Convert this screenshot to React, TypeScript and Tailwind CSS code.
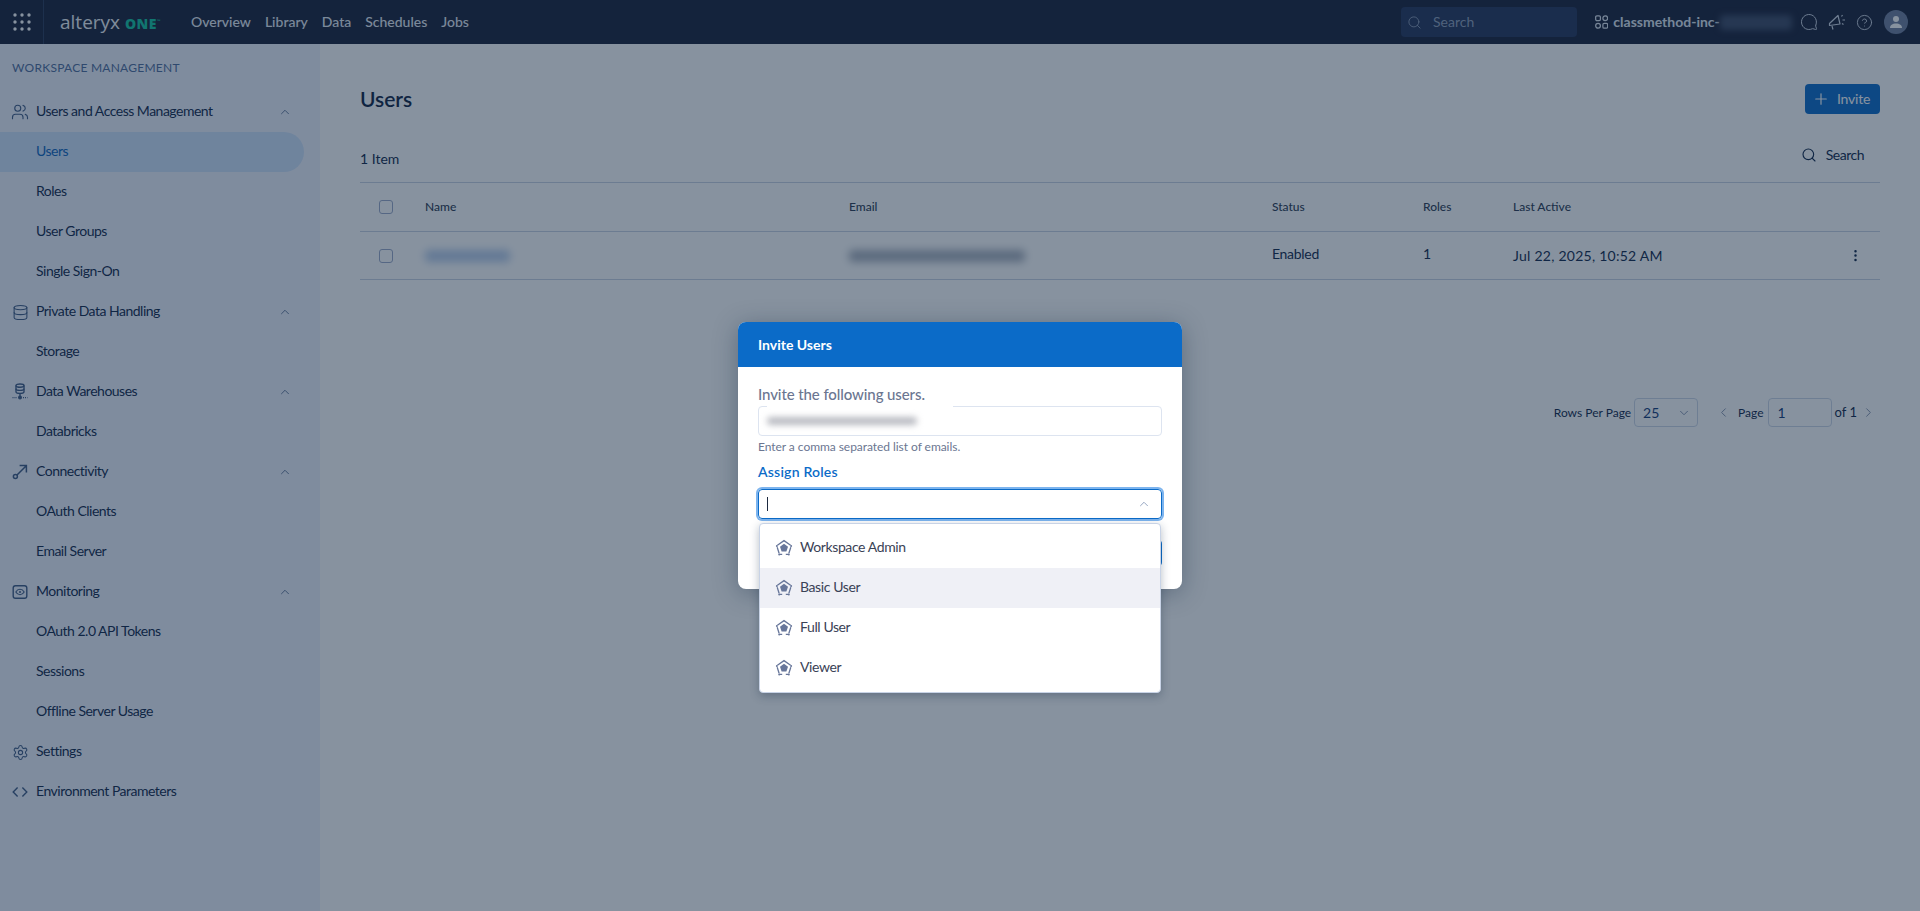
import React from "react";
import {
  ChevronUp,
  ChevronDown,
  ChevronLeft,
  ChevronRight,
  Search,
  Plus,
  MessageCircle,
  CircleHelp,
  EllipsisVertical,
  Users as UsersIcon,
  Database,
  Settings,
} from "lucide-react";

const GridDots = () => (
  <svg width="20" height="18" viewBox="0 0 20 18" fill="#ffffff">
    {[2, 9, 16].flatMap((y) =>
      [3, 10, 17].map((x) => <circle key={`${x}-${y}`} cx={x} cy={y} r="1.7" />)
    )}
  </svg>
);

const Warehouse = () => (
  <svg width="16" height="18" viewBox="0 0 16 18" fill="none" stroke="currentColor" strokeWidth="1.4">
    <ellipse cx="8" cy="2.6" rx="4" ry="1.6" />
    <path d="M4 2.6v6.2c0 .9 1.8 1.6 4 1.6s4-.7 4-1.600V2.600" />
    <path d="M4 5.800c0 .9 1.8 1.600 4 1.600s4-.7 4-1.600" />
    <path d="M8 10.400v3" />
    <circle cx="8" cy="14.600" r="1.300" fill="currentColor" />
    <path d="M0.500 14.600h4.500M11 14.600h4.500" strokeDasharray="1 1" />
  </svg>
);

const Connect = () => (
  <svg width="16" height="16" viewBox="0 0 16 16" fill="none" stroke="currentColor" strokeWidth="1.500">
    <circle cx="3.400" cy="12.600" r="2" />
    <path d="M5 11 14 2M7.600 1.600h6.800v6.800" />
  </svg>
);

const Monitor = () => (
  <svg width="16" height="16" viewBox="0 0 16 16" fill="none" stroke="currentColor" strokeWidth="1.400">
    <rect x="1.200" y="1.700" width="13.600" height="12.600" rx="2.200" />
    <path d="M3.800 8c1.100-1.800 2.500-2.700 4.200-2.700s3.100.9 4.200 2.700c-1.100 1.800-2.500 2.700-4.200 2.700S4.900 9.800 3.800 8Z" strokeWidth="1.100" />
    <circle cx="8" cy="8" r="1" fill="currentColor" stroke="none" />
  </svg>
);

const CodeAngles = () => (
  <svg width="16" height="16" viewBox="0 0 16 16" fill="none" stroke="currentColor" strokeWidth="1.400">
    <path d="M5.600 3.500 1.200 8l4.400 4.500M10.400 3.500 14.800 8l-4.400 4.500" />
  </svg>
);

const Workspaces = () => (
  <svg width="14" height="16" viewBox="0 0 14 16" fill="none" stroke="currentColor" strokeWidth="1.300">
    <rect x="0.700" y="1.500" width="5" height="5" rx="1.300" />
    <circle cx="10.800" cy="4" r="2.500" />
    <circle cx="3.200" cy="12" r="2.500" />
    <rect x="8.300" y="9.500" width="5" height="5" rx="1.300" />
  </svg>
);

const Megaphone = () => (
  <svg width="18" height="18" viewBox="0 0 18 18" fill="none" stroke="currentColor" strokeWidth="1.200">
    <path d="M1.500 10.500 10 2.500l2 8.500-10.500 1.500Z" strokeLinejoin="round" />
    <path d="M4 13l1 3.500" />
    <path d="M13.500 3.500l1-1.500M14.500 7h2.500M14 10.500l1.500 1" />
  </svg>
);

const RoleIcon = () => (
  <svg width="18" height="18" viewBox="0 0 18 18" fill="none" stroke="#67769a" strokeWidth="1.300">
    <path d="M2.400 6.300 9 1.600l6.600 4.700" />
    <path d="M2.200 8.200l1.900 6M15.800 8.200l-1.900 6" />
    <path d="M4.200 15.400h3M10.800 15.400h3" />
    <circle cx="1.900" cy="7" r="1" fill="#67769a" stroke="none" />
    <circle cx="16.100" cy="7" r="1" fill="#67769a" stroke="none" />
    <circle cx="4.200" cy="15.400" r="1" fill="#67769a" stroke="none" />
    <circle cx="13.800" cy="15.400" r="1" fill="#67769a" stroke="none" />
    <path d="M9 4.800 13 7.800 11.400 12.400H6.600L5 7.800Z" fill="#67769a" stroke="none" />
  </svg>
);

const iconTone = "text-[#3f5b85] shrink-0";
const chev = <ChevronUp size={14} strokeWidth={1.6} className="ml-auto text-[#5a7196]" />;

type Row = { label: string; icon?: React.ReactNode; collapsible?: boolean; active?: boolean };

const rows: Row[] = [
  { label: "Users and Access Management", icon: <UsersIcon size={18} strokeWidth={1.5} className={iconTone} />, collapsible: true },
  { label: "Users", active: true },
  { label: "Roles" },
  { label: "User Groups" },
  { label: "Single Sign-On" },
  { label: "Private Data Handling", icon: <Database size={17} strokeWidth={1.5} className={iconTone} />, collapsible: true },
  { label: "Storage" },
  { label: "Data Warehouses", icon: <span className={iconTone}><Warehouse /></span>, collapsible: true },
  { label: "Databricks" },
  { label: "Connectivity", icon: <span className={iconTone}><Connect /></span>, collapsible: true },
  { label: "OAuth Clients" },
  { label: "Email Server" },
  { label: "Monitoring", icon: <span className={iconTone}><Monitor /></span>, collapsible: true },
  { label: "OAuth 2.0 API Tokens" },
  { label: "Sessions" },
  { label: "Offline Server Usage" },
  { label: "Settings", icon: <Settings size={17} strokeWidth={1.5} className={iconTone} /> },
  { label: "Environment Parameters", icon: <span className={iconTone}><CodeAngles /></span> },
];

const SideRow = ({ row }: { row: Row }) => (
  <div
    className={`flex h-10 w-[304px] items-center text-sm tracking-[-0.5px] ${
      row.active ? "rounded-r-full bg-[#cfe2fb] text-[#0a63bd]" : "text-[#10274a]"
    }`}
  >
    {row.icon ? (
      <span className="flex w-9 shrink-0 justify-center pl-[4px]">{row.icon}</span>
    ) : (
      <span className="w-9 shrink-0" />
    )}
    <span className="-mt-[2px]">{row.label}</span>
    {row.collapsible && <span className="ml-auto pr-[12px]">{chev}</span>}
  </div>
);

const Checkbox = () => (
  <span className="block h-[14px] w-[14px] rounded-[3px] border border-[#9aa9c8] bg-transparent" />
);

const Blur = ({ className }: { className: string }) => (
  <span className={`block rounded-sm ${className}`} />
);

export default function App() {
  return (
    <div className="relative h-[911px] w-[1920px] overflow-hidden bg-white font-['Lato',sans-serif] text-[#10274a]">
      {/* Top bar */}
      <header className="flex h-11 items-center bg-[#192038] text-white">
        <div className="flex h-full w-11 items-center justify-center border-r border-[#2b3b5a]">
          <GridDots />
        </div>
        <div className="ml-[16px] flex w-[131px] items-baseline">
          <span className="font-['Open_Sans',sans-serif] text-[19px] leading-none text-[#eef2f7]">alteryx</span>
          <span className="ml-[5px] font-['Open_Sans',sans-serif] text-[14px] font-extrabold leading-none tracking-[0.4px] text-[#13c4a0]">ONE</span>
          <span className="mb-[8px] self-end text-[5px] leading-none text-[#13c4a0]">™</span>
        </div>
        <nav className="flex items-center gap-[14px] text-sm font-medium text-[#e6ecf5]">
          <span>Overview</span>
          <span>Library</span>
          <span>Data</span>
          <span>Schedules</span>
          <span>Jobs</span>
        </nav>
        <div className="ml-auto flex h-[30px] w-[176px] items-center rounded bg-[#25345a] pl-[6px] text-sm text-[#8f9fb9]">
          <Search size={15} strokeWidth={1.4} />
          <span className="ml-[11px]">Search</span>
        </div>
        <div className="ml-[18px] flex w-[197px] items-center text-[#dfe6f1]">
          <Workspaces />
          <span className="ml-[5px] whitespace-nowrap text-sm font-bold">classmethod-inc-</span>
          <Blur className="h-[15px] w-[76px] bg-[#3d4a66] blur-[3px]" />
        </div>
        <div className="ml-[8px] flex items-center text-[#cfd8e6]">
          <MessageCircle size={18} strokeWidth={1.3} className="-scale-x-100" />
          <span className="ml-[10px]"><Megaphone /></span>
          <CircleHelp size={17} strokeWidth={1.3} className="ml-[10px]" />
        </div>
        <div className="ml-[11px] mr-[12px] flex h-6 w-6 items-center justify-center rounded-full bg-[#6f7d9d]">
          <svg width="14" height="14" viewBox="0 0 14 14" fill="#ffffff">
            <circle cx="7" cy="4" r="3" />
            <path d="M1 13c0-3 2.500-4.500 6-4.500s6 1.500 6 4.500Z" />
          </svg>
        </div>
      </header>

      <div className="flex h-[867px]">
        {/* Sidebar */}
        <aside className="w-[320px] shrink-0 bg-[#eff3fd] pt-[16px]">
          <div className="pl-[12px] text-xs uppercase leading-4 tracking-[0.25px] text-[#4e6c9c]">Workspace Management</div>
          <div className="mt-[16px]">
            {rows.map((r) => (
              <SideRow key={r.label} row={r} />
            ))}
          </div>
        </aside>

        {/* Main */}
        <main className="min-w-0 flex-1 px-[40px] pt-[40px]">
          <div className="flex h-[30px] items-center justify-between">
            <h1 className="text-[21px] font-semibold text-[#0e2343]">Users</h1>
            <button className="flex h-[30px] w-[75px] items-center gap-[7px] rounded bg-[#0b6bc8] pl-[7px] text-sm tracking-[-0.2px] text-white">
              <Plus size={18} strokeWidth={1.6} />
              Invite
            </button>
          </div>
          <div className="mt-[30px] flex h-[24px] items-center justify-between pr-[16px] text-sm">
            <span className="mt-[6px]">1 Item</span>
            <span className="mb-[2px] flex items-center gap-[9px] tracking-[-0.5px]">
              <Search size={16} strokeWidth={1.7} />
              Search
            </span>
          </div>
          <div className="mt-[14px] border-t border-[#c9d3e3]">
            <div className="flex h-[49px] items-center border-b border-[#c9d3e3] text-xs font-medium text-[#2d3b52]">
              <span className="w-[65px] pl-[19px]"><Checkbox /></span>
              <span className="w-[424px]">Name</span>
              <span className="w-[423px]">Email</span>
              <span className="w-[151px]">Status</span>
              <span className="w-[90px]">Roles</span>
              <span>Last Active</span>
            </div>
            <div className="flex h-[48px] items-center border-b border-[#c9d3e3] text-sm">
              <span className="w-[65px] pl-[19px]"><Checkbox /></span>
              <span className="w-[424px]"><Blur className="h-[12px] w-[85px] bg-[#b5cbea] blur-[4px]" /></span>
              <span className="w-[423px]"><Blur className="h-[12px] w-[176px] bg-[#a5adba] blur-[4px]" /></span>
              <span className="w-[151px] -mt-[3px] tracking-[-0.3px]">Enabled</span>
              <span className="w-[90px] -mt-[3px]">1</span>
              <span className="tracking-[0.25px]">Jul 22, 2025, 10:52 AM</span>
              <EllipsisVertical size={15} strokeWidth={2} className="ml-auto mr-[17px]" />
            </div>
          </div>
          {/* Pagination */}
          <div className="mt-[118px] flex items-center justify-end text-sm">
            <span className="text-xs">Rows Per Page</span>
            <span className="ml-[3px] flex h-[29px] w-[64px] items-center justify-between rounded border border-[#cdd6e6] pl-[8px] pr-[6px] text-sm text-[#123a78]">
              25
              <ChevronDown size={14} strokeWidth={1.6} className="text-[#7d8dab]" />
            </span>
            <ChevronLeft size={15} strokeWidth={1.6} className="ml-[18px] text-[#8795af]" />
            <span className="ml-[7px] text-xs">Page</span>
            <span className="ml-[4px] flex h-[29px] w-[64px] items-center rounded border border-[#cdd6e6] pl-[9px] text-sm text-[#123a78]">1</span>
            <span className="ml-[3px] text-[13px]">of 1</span>
            <ChevronRight size={15} strokeWidth={1.6} className="ml-[4px] mr-[4px] text-[#8795af]" />
          </div>
        </main>
      </div>

      {/* Scrim */}
      <div className="absolute inset-0 bg-[#0f253f]/50" />

      {/* Modal */}
      <div className="absolute left-[738px] top-[322px] h-[267px] w-[444px] rounded-lg bg-white shadow-[0_4px_24px_rgba(15,37,63,0.35)]">
        <div className="flex h-[45px] items-center rounded-t-lg bg-[#0b6bc8] px-5 text-sm font-bold text-white">Invite Users</div>
        <div className="px-5 pt-[18px]">
          <div className="text-[15px] font-medium leading-[18px] tracking-[-0.1px] text-[#6b7691]">Invite the following users.</div>
          <div className="relative mt-[3px] flex h-[30px] items-center rounded border border-[#dde4f0] pl-[8px]">
            <span className="absolute -top-px left-[8px] h-[2px] w-[186px] bg-white" />
            <Blur className="h-[8px] w-[150px] bg-[#b8bac1] blur-[3px]" />
          </div>
          <div className="mt-[3px] text-xs leading-[16px] tracking-[-0.05px] text-[#6b7691]">Enter a comma separated list of emails.</div>
          <div className="mt-[8px] text-sm font-semibold leading-[18px] tracking-[0.2px] text-[#0b6bc8]">Assign Roles</div>
          <div className="relative mt-[8px] flex h-[30px] items-center rounded border border-[#0b6bc8] pl-[8px] shadow-[0_0_0_2px_#7db4ee]">
            <span className="h-[14px] w-px bg-[#1d2a40]" />
            <ChevronUp size={14} strokeWidth={1.6} className="absolute right-[10px] text-[#8fa0bd]" />
          </div>
          <div className="mt-[21px] flex justify-end">
            <span className="h-[26px] w-[80px] rounded bg-[#0b6bc8]" />
          </div>
        </div>
      </div>

      {/* Dropdown */}
      <div className="absolute left-[759px] top-[523px] w-[402px] rounded border border-[#c8d3e6] bg-white py-[4px] shadow-[0_3px_10px_rgba(15,37,63,0.3)]">
        {["Workspace Admin", "Basic User", "Full User", "Viewer"].map((t) => (
          <div
            key={t}
            className={`flex h-10 items-center pl-[15px] text-sm tracking-[-0.4px] text-[#3a4256] ${t === "Basic User" ? "bg-[#eff0f6]" : ""}`}
          >
            <RoleIcon />
            <span className="-mt-[2px] ml-[7px]">{t}</span>
          </div>
        ))}
      </div>
    </div>
  );
}
